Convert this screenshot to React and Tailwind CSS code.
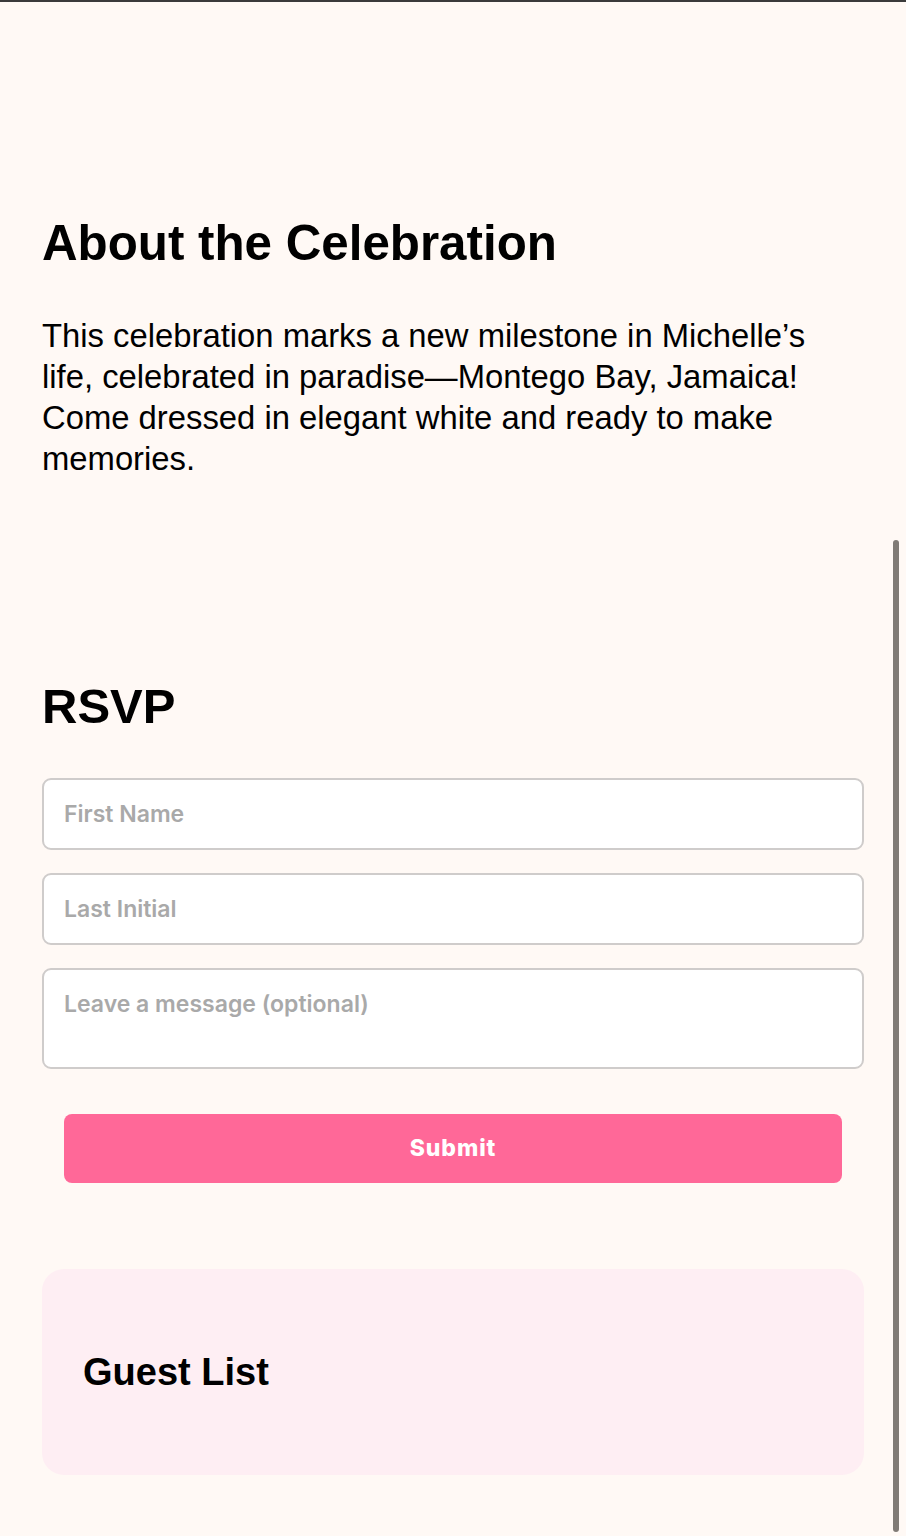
export default function App() {
  return (
    <div className="relative min-h-[1536px] bg-[#fff9f5]" style={{ fontFamily: '"Liberation Sans", Arial, sans-serif' }}>
      <div className="h-[2px] bg-[#3b3b3b]" />
      <div className="px-[42px] pt-[211px] pb-[60px]">
        <section>
          <h2 className="text-[49.3px] leading-[60px] font-bold text-black">About the Celebration</h2>
          <p className="mt-[42px] text-[32.8px] leading-[41px] text-black">
            This celebration marks a new milestone in Michelle’s life, celebrated in paradise—Montego Bay, Jamaica! Come dressed in elegant white and ready to make memories.
          </p>
        </section>
        <section className="mt-[197px]">
          <h2 className="text-[49px] leading-[60px] font-bold text-black">RSVP</h2>
          <form className="mt-[42px] flex flex-col gap-[23px]" style={{ fontFamily: 'Inter, "Noto Sans", sans-serif' }} onSubmit={(e) => e.preventDefault()}>
            <input
              type="text"
              placeholder="First Name"
              className="h-[72px] w-full rounded-[9px] border-2 border-[#cfcccb] bg-white px-[20px] text-[23px] font-semibold text-black placeholder:text-[#a9a9a9] outline-none"
            />
            <input
              type="text"
              placeholder="Last Initial"
              className="h-[72px] w-full rounded-[9px] border-2 border-[#cfcccb] bg-white px-[20px] text-[23px] font-semibold text-black placeholder:text-[#a9a9a9] outline-none"
            />
            <textarea
              placeholder="Leave a message (optional)"
              className="h-[101px] w-full resize-none rounded-[9px] border-2 border-[#cfcccb] bg-white px-[20px] py-[20px] text-[23px] leading-[28px] font-semibold text-black placeholder:text-[#a9a9a9] outline-none"
            />
            <button
              type="submit"
              className="mx-[22px] mt-[22px] h-[69px] rounded-[8px] bg-[#ff6898] text-[23px] font-extrabold tracking-[0.9px] text-white"
            >
              Submit
            </button>
          </form>
        </section>
        <section className="mt-[86px] rounded-[22px] bg-[#feeef3] px-[41px] py-[80px]">
          <h3 className="text-[38px] leading-[46px] font-bold text-black">Guest List</h3>
        </section>
      </div>
      <div className="absolute right-[7px] top-[540px] h-[992px] w-[6px] rounded-full bg-[#807b76]" />
    </div>
  );
}
